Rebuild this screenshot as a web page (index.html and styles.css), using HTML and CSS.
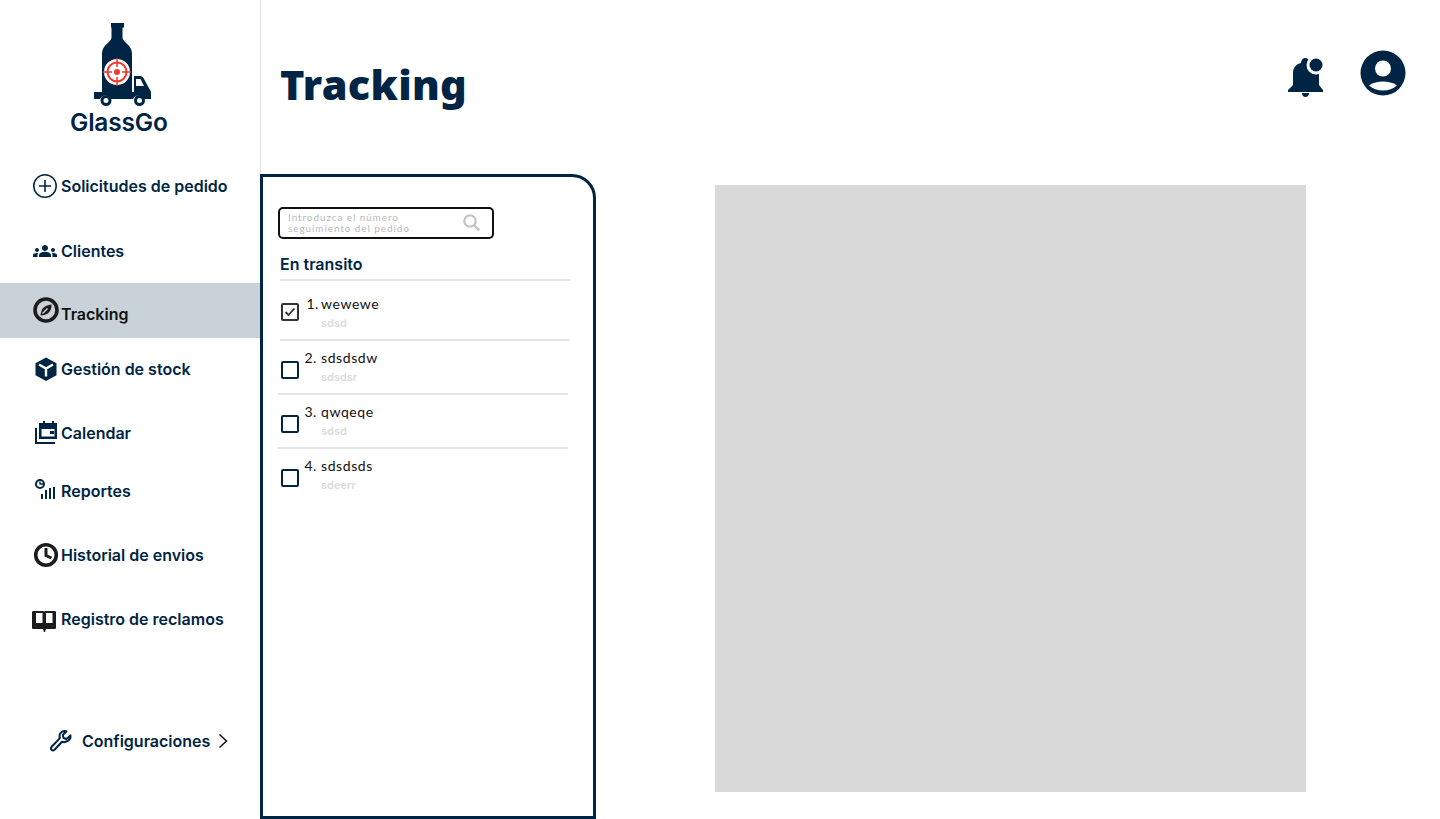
FILE: index.html
```html
<!DOCTYPE html>
<html lang="es">
<head>
	<meta charset="UTF-8">
	<title>Tracking</title>
	<link rel="stylesheet" href="styles.css">
</head>
<body>
	<div class="app">
		<aside class="sidebar">
			<div class="logo">
				<svg class="logo-mark" width="66" height="88" viewBox="90 20 66 88">
					<path fill="#002544" d="M111 23h13v4.500h-1.500v10c0 5 9.500 7 9.500 16v39h-30v-39c0-9 9.500-11 9.500-16v-10h-.5z"/>
					<path fill="#002544" d="M134 76h6c2 0 3 1 4 3l6 11c1 1 1 2 1 4v5h-7a6 6 0 0 0-11 0h-22a6 6 0 0 0-11 0h-6v-7h40z"/>
					<path fill="#fff" d="M136 79h4.500l3.500 7h-8z"/>
					<circle cx="106" cy="100.500" r="4" fill="#fff" stroke="#002544" stroke-width="3"/>
					<circle cx="139.500" cy="100.500" r="4" fill="#fff" stroke="#002544" stroke-width="3"/>
					<circle cx="117" cy="72" r="13" fill="#fff"/>
					<circle cx="117" cy="72" r="9.500" fill="#fff" stroke="#f0392f" stroke-width="2"/>
					<circle cx="117" cy="72" r="3" fill="#f0392f"/>
					<path stroke="#f0392f" stroke-width="1.500" d="M117 58v9M117 77v9M103 72h9M122 72h9"/>
				</svg>
				<span class="logo-name">GlassGo</span>
			</div>
			<nav class="nav">
				<a class="nav-item" href="#">
					<svg class="nav-icon" viewBox="0 0 28 28"><circle cx="13" cy="14" r="11.200" fill="none" stroke="#002544" stroke-width="1.500"/><path stroke="#002544" stroke-width="1.600" d="M13 8v12M7 14h12"/></svg>
					Solicitudes de pedido
				</a>
				<a class="nav-item" href="#">
					<svg class="nav-icon" viewBox="-1 -2 28 28"><path fill="#002544" d="M4 13c1.100 0 2-.9 2-2s-.9-2-2-2-2 .9-2 2 .9 2 2 2zm1.130 1.100C4.760 14.040 4.390 14 4 14c-.99 0-1.930.21-2.780.58C.48 14.900 0 15.620 0 16.430V18h4.500v-1.610c0-.83.23-1.610.63-2.290zM20 13c1.100 0 2-.9 2-2s-.9-2-2-2-2 .9-2 2 .9 2 2 2zm4 3.430c0-.81-.48-1.530-1.220-1.850C21.930 14.210 20.990 14 20 14c-.39 0-.76.04-1.130.1.4.68.63 1.460.63 2.290V18H24zm-7.760-2.780C15.070 13.130 13.630 12.750 12 12.750s-3.070.39-4.240.9C6.680 14.130 6 15.210 6 16.390V18h12v-1.610c0-1.180-.68-2.260-1.760-2.740zM12 12c1.660 0 3-1.340 3-3s-1.340-3-3-3-3 1.340-3 3 1.340 3 3 3z"/></svg>
					Clientes
				</a>
				<a class="nav-item nav-item-active" href="#">
					<svg class="nav-icon nav-icon-up" viewBox="0 0 28 28"><circle cx="14" cy="14" r="11" fill="none" stroke="#1c1c1c" stroke-width="3.600"/><path fill="#1c1c1c" d="M19.500 8.500c.3 5-2 9-7 10.500l-4 .5c0-1 .5-3 1-4.500C11 11 14.500 9 19.500 8.500z"/><path stroke="#c9d1d9" stroke-width="1.400" d="M10.500 17.500l5-5"/></svg>
					<span class="nav-label-low">Tracking</span>
				</a>
				<a class="nav-item" href="#">
					<svg class="nav-icon" viewBox="0 0 28 28"><path fill="#002544" d="M14 2.500l10.500 5.800v12L14 26 3.500 20.300v-12z"/><path fill="none" stroke="#fff" stroke-width="2.400" d="M7 9.500l7 4 7-4M14 13.500v8"/></svg>
					Gestión de stock
				</a>
				<a class="nav-item" href="#">
					<svg class="nav-icon" viewBox="0 0 28 28"><path fill="#002544" fill-rule="evenodd" d="M7 4h4V2h2v2h7V2h2v2h3v16H7zm2.500 6v7.500h13V10z"/><path fill="#002544" d="M3 9h2v14h18v2H3z"/><path fill="#002544" d="M18 12h4v3h-4z"/></svg>
					Calendar
				</a>
				<a class="nav-item" href="#">
					<svg class="nav-icon" viewBox="0 0 28 28"><circle cx="8" cy="7" r="4" fill="none" stroke="#002544" stroke-width="2"/><path fill="none" stroke="#002544" stroke-width="1.300" d="M8 4.500V7h3"/><path stroke="#002544" stroke-width="2" d="M10 22v-5M14 22v-9M18 22V11M22 22V10"/></svg>
					Reportes
				</a>
				<a class="nav-item" href="#">
					<svg class="nav-icon" viewBox="0 0 28 28"><circle cx="14" cy="14" r="10.300" fill="none" stroke="#1c1c1c" stroke-width="3.600"/><path fill="none" stroke="#1c1c1c" stroke-width="3" d="M14 7v7.500l5.500 2.500"/></svg>
					Historial de envios
				</a>
				<a class="nav-item" href="#">
					<svg class="nav-icon" viewBox="0 -2 28 28"><path fill="#1c1c1c" d="M0 5.500C0 4.500.6 4 1.500 4h9c1 0 1.500.3 1.500.8.300-.5 1-.8 1.500-.8h9c1 0 1.500.5 1.500 1.500v15c0 1-.5 1.500-1.500 1.500H14l-1 3h-1l-1-3H1.500C.6 22 0 21.500 0 20.500z"/><path fill="#fff" d="M4 6h6.500v10H4zM14 6h6.500v10H14z"/></svg>
					Registro de reclamos
				</a>
			</nav>
			<a class="settings" href="#">
				<svg class="settings-icon" width="24" height="24" viewBox="0 0 24 24"><path fill="none" stroke="#002544" stroke-width="2" stroke-linejoin="round" d="M21.500 6.500l-4 3.500-3-1-.7-3 3.700-3.700c-3-.9-6 .5-6.800 3.300-.3 1.300-.2 2.500.2 3.500L2.700 17.800c-1 1-1 2.200-.2 3s2.100.8 3-.1l7.500-8c1.100.5 2.500.6 3.800.1 3-1 5.200-3.300 4.700-6.300z"/></svg>
				<span class="settings-label">Configuraciones</span>
				<svg class="settings-arrow" width="10" height="16" viewBox="0 0 10 16"><path fill="none" stroke="#111" stroke-width="1.500" d="M1.500 1.500L8.500 8l-7 6.500"/></svg>
			</a>
		</aside>

		<main class="main">
			<header class="topbar">
				<h1 class="title">Tracking</h1>
				<div class="top-icons">
					<svg width="38" height="44" viewBox="0 0 38 44"><path fill="#002544" d="M13 9c0-3 2-5 4-5 2.500 0 4 1.500 4 3 5 1 10 5 10 11v13l4 5v2H0v-2l5-5V19c0-5 3-9 8-10z"/><circle cx="28" cy="11" r="9.500" fill="#fff"/><circle cx="28" cy="11" r="6.500" fill="#002544"/><path fill="#002544" d="M14 39h7c0 2.500-1.500 4-3.500 4S14 41.500 14 39z"/></svg>
					<svg width="46" height="46" viewBox="0 0 46 46"><circle cx="23" cy="23" r="22.500" fill="#002544"/><circle cx="23" cy="18.500" r="8" fill="#fff"/><path fill="#fff" d="M9 35.500c4-3 9-4 14-4s10 1 14 4c-4 3.500-8.500 5-14 5s-10-1.500-14-5z"/></svg>
				</div>
			</header>
			<div class="content">
				<section class="panel">
					<div class="search">
						<span class="search-text">Introduzca el número seguimiento del pedido</span>
						<svg width="20" height="20" viewBox="0 0 20 20"><circle cx="8" cy="8" r="5.700" fill="none" stroke="#c4c4c4" stroke-width="2.200"/><path stroke="#c4c4c4" stroke-width="2.600" d="M12.300 12.300l5 5"/></svg>
					</div>
					<h2 class="group-title">En transito</h2>
					<ul class="list">
						<li class="row row-first">
							<span class="check check-on"><svg width="12" height="10" viewBox="0 0 12 10"><path fill="none" stroke="#333" stroke-width="1.800" d="M1.500 5l3 3 6-6.500"/></svg></span>
							<div class="row-body"><p class="row-name"><span class="row-num">1.</span>wewewe</p><p class="row-sub">sdsd</p></div>
						</li>
						<li class="row">
							<span class="check"></span>
							<div class="row-body"><p class="row-name"><span class="row-num">2.</span>sdsdsdw</p><p class="row-sub">sdsdsr</p></div>
						</li>
						<li class="row">
							<span class="check"></span>
							<div class="row-body"><p class="row-name"><span class="row-num">3.</span>qwqeqe</p><p class="row-sub">sdsd</p></div>
						</li>
						<li class="row">
							<span class="check"></span>
							<div class="row-body"><p class="row-name"><span class="row-num">4.</span>sdsdsds</p><p class="row-sub">sdeerr</p></div>
						</li>
					</ul>
				</section>
				<div class="map"></div>
			</div>
		</main>
	</div>
</body>
</html>
```

FILE: styles.css
```css
* {
	margin: 0;
	padding: 0;
	box-sizing: border-box;
}
html, body {
	height: 100%;
	overflow: hidden;
}
body {
	background: #fff;
	color: #002544;
	font-family: Inter, "Liberation Sans", sans-serif;
}
a {
	color: inherit;
	text-decoration: none;
}
ul {
	list-style: none;
}
.app {
	display: flex;
	height: 819px;
}

/* sidebar */
.sidebar {
	width: 261px;
	flex: none;
	border-right: 1px solid #e3e3e3;
}
.logo {
	height: 153px;
	padding: 20px 0 0 90px;
}
.logo-mark {
	display: block;
}
.logo-name {
	display: block;
	margin: 0 0 0 -20px;
	font-weight: 600;
	font-size: 24.5px;
	line-height: 28px;
	letter-spacing: -0.2px;
	white-space: nowrap;
}
.nav {
	display: grid;
	grid-template-rows: 66px 64px 55px 62px 66px 50px 78px 50px;
}
.nav-item {
	display: flex;
	align-items: center;
	gap: 1px;
	padding-left: 32px;
	font-size: 16px;
	font-weight: 600;
}
.nav-item-active {
	background: #c9d1d9;
	color: #111;
}
.nav-icon {
	width: 28px;
	height: 28px;
	flex: none;
}
.nav-icon-up {
	margin-top: -1px;
}
.nav-label-low {
	margin-top: 7px;
}
.settings {
	display: flex;
	align-items: center;
	height: 30px;
	margin-top: 82px;
	padding-left: 49px;
	font-size: 16px;
	font-weight: 600;
}
.settings-label {
	margin-left: 9px;
}
.settings-arrow {
	margin-left: 8px;
}

/* main */
.main {
	flex: 1;
	min-width: 0;
}
.topbar {
	display: flex;
	justify-content: space-between;
	height: 174px;
	padding: 49px 34px 0 19px;
}
.title {
	font-family: "Noto Sans", sans-serif;
	font-weight: 900;
	font-size: 41.5px;
	line-height: 70px;
	letter-spacing: 0.3px;
}
.top-icons {
	display: flex;
	align-items: flex-start;
	gap: 34px;
	padding-top: 1px;
}
.top-icons svg:first-child {
	margin-top: 4px;
}
.content {
	display: flex;
	align-items: flex-start;
}

/* tracking panel */
.panel {
	width: 336px;
	height: 645px;
	margin-left: -1px;
	padding: 30px 23px 0 15px;
	border: 3px solid #002544;
	border-top-right-radius: 24px;
	flex: none;
}
.search {
	display: flex;
	align-items: center;
	justify-content: space-between;
	width: 216px;
	height: 32px;
	padding: 0 10px 0 8px;
	border: 2px solid #111;
	border-radius: 5px;
}
.search-text {
	width: 140px;
	font-family: Lato, sans-serif;
	font-size: 10px;
	line-height: 11px;
	letter-spacing: 0.9px;
	white-space: normal;
	color: #bbb;
}
.group-title {
	margin: 15px 0 0 2px;
	padding-bottom: 5px;
	border-bottom: 2px solid #e4e4e4;
	font-size: 16px;
	font-weight: 600;
	line-height: 20px;
}
.row {
	display: flex;
	align-items: flex-start;
	height: 54px;
	margin-right: 2px;
	padding-left: 3px;
	border-bottom: 2px solid #e4e4e4;
}
.row:last-child {
	border-bottom: 0;
}
.row-first {
	height: 60px;
	margin: 0 0 0 2px;
	padding-left: 1px;
}
.check {
	display: flex;
	align-items: center;
	justify-content: center;
	width: 18px;
	height: 18px;
	flex: none;
	margin-top: 20px;
	border: 2px solid #002544;
	border-radius: 2px;
}
.row-first .check {
	margin-top: 22px;
}
.check-on {
	border-color: #333;
}
.row-body {
	margin-left: 4px;
	padding-top: 8px;
}
.row-first .row-body {
	padding-top: 14px;
}
.row-name {
	display: flex;
	font-family: Lato, sans-serif;
	font-size: 14px;
	line-height: 18px;
	letter-spacing: 0.6px;
	color: #111;
}
.row-num {
	width: 14px;
	margin-right: 4px;
	text-align: right;
}
.row-first .row-num {
	width: 16px;
	margin-right: 2px;
}
.row-sub {
	margin: 3px 0 0 18px;
	font-size: 11px;
	font-weight: 600;
	line-height: 14px;
	color: #dcdcdc;
}
.map {
	width: 591px;
	height: 607px;
	margin: 11px 0 0 119px;
	background: #d9d9d9;
}
```
